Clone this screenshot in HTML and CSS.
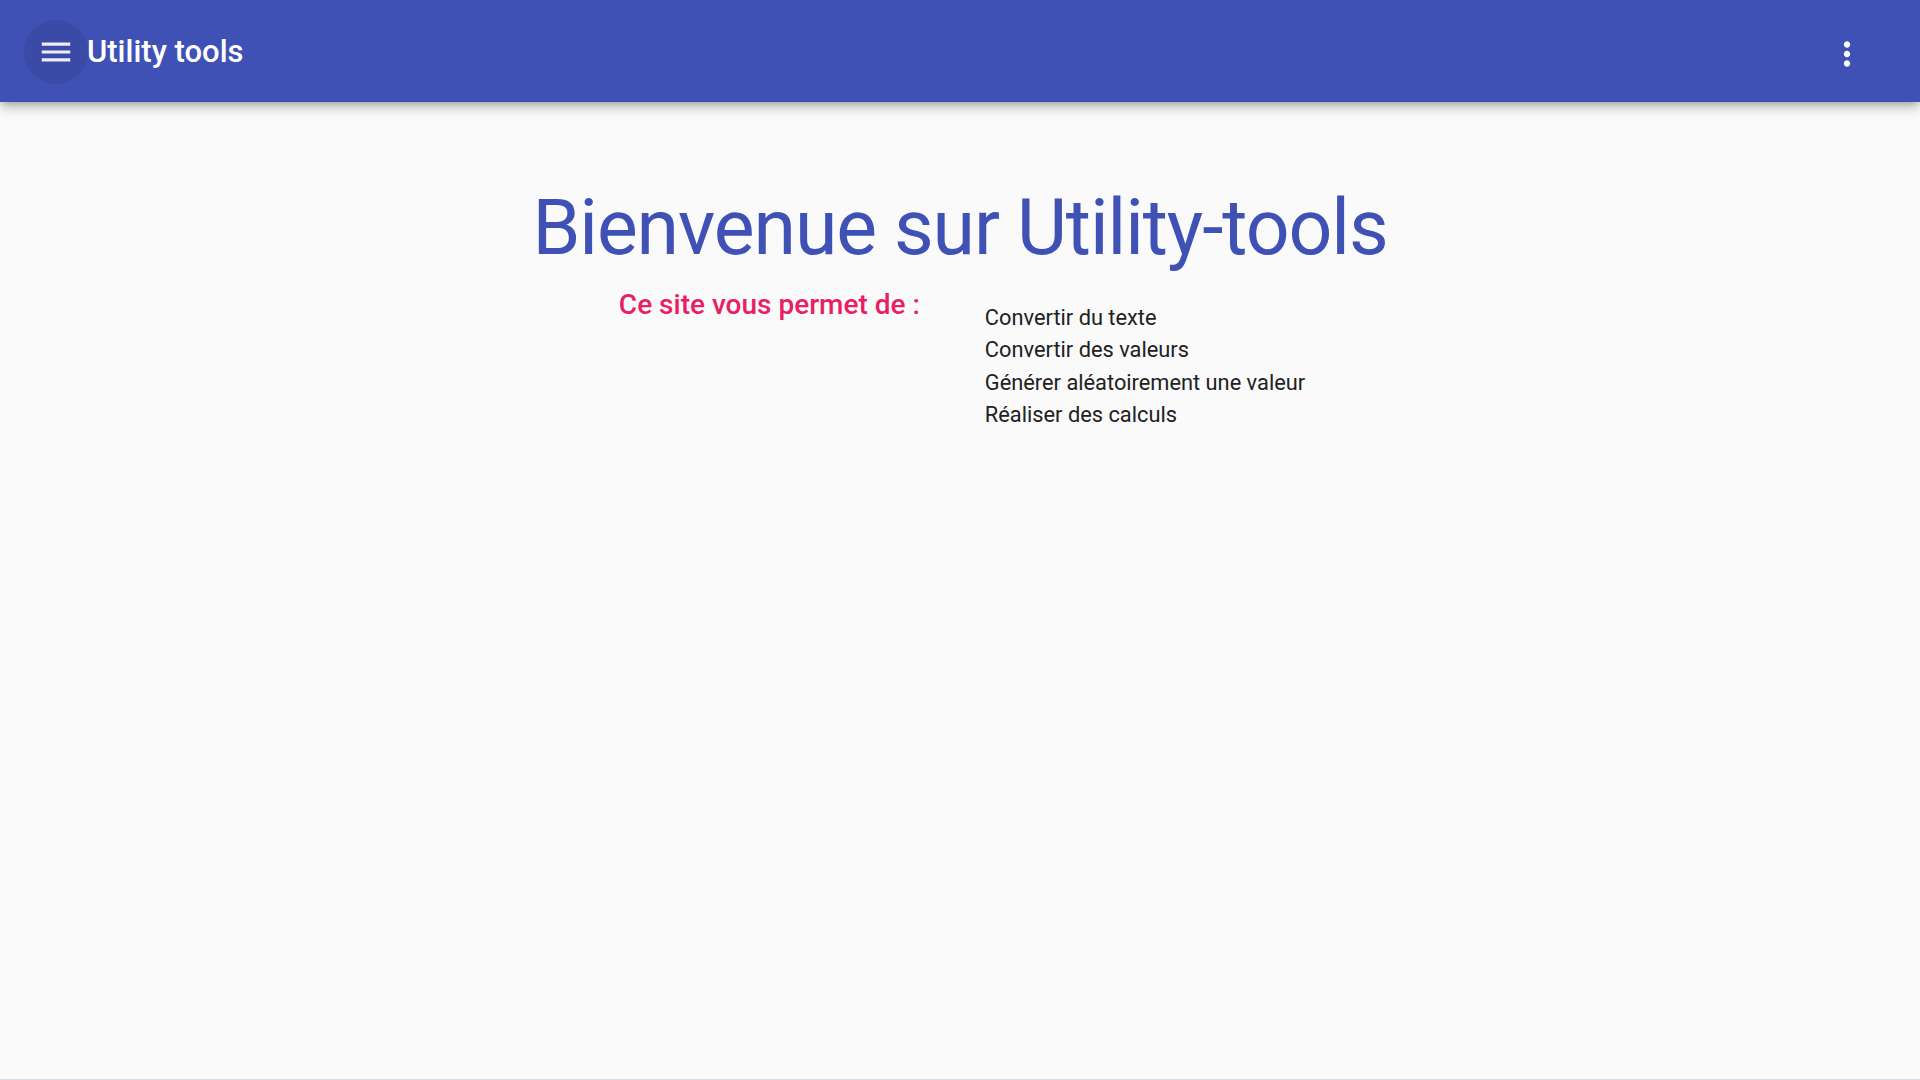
FILE: index.html
```html
<!DOCTYPE html>
<html lang="fr">
<head>
<meta charset="utf-8">
<title>Utility tools</title>
<link rel="stylesheet" href="styles.css">
</head>
<body>
<header class="toolbar">
  <div class="toolbar-left">
    <button class="icon-btn menu-btn" aria-label="menu">
      <svg viewBox="0 0 24 24" width="38" height="38"><path d="M3 18h18v-2H3v2zm0-5h18v-2H3v2zm0-7v2h18V6H3z" fill="currentColor"/></svg>
    </button>
    <span class="app-title">Utility tools</span>
  </div>
  <button class="icon-btn more-btn" aria-label="plus">
    <svg viewBox="0 0 24 24" width="38" height="38"><path d="M12 8c1.1 0 2-.9 2-2s-.9-2-2-2-2 .9-2 2 .9 2 2 2zm0 2c-1.1 0-2 .9-2 2s.9 2 2 2 2-.9 2-2-.9-2-2-2zm0 6c-1.1 0-2 .9-2 2s.9 2 2 2 2-.9 2-2-.9-2-2-2z" fill="currentColor"/></svg>
  </button>
</header>
<main class="content">
  <h1 class="welcome">Bienvenue sur Utility-tools</h1>
  <div class="features">
    <h2 class="features-title">Ce site vous permet de :</h2>
    <ul class="features-list">
      <li>Convertir du texte</li>
      <li>Convertir des valeurs</li>
      <li>Générer aléatoirement une valeur</li>
      <li>Réaliser des calculs</li>
    </ul>
  </div>
</main>
</body>
</html>
```
FILE: styles.css
```css
html, body {
  margin: 0;
  padding: 0;
  height: 100%;
}
body {
  background: #fafafa;
  font-family: Roboto, "Noto Sans", Arial, sans-serif;
  color: rgba(0, 0, 0, 0.87);
  display: flex;
  flex-direction: column;
  box-sizing: border-box;
  border-bottom: 1px solid #d3dce4;
}
.toolbar {
  height: 102px;
  background: #3f51b5;
  color: #fff;
  display: flex;
  align-items: center;
  justify-content: space-between;
  padding: 0 24px 0 24px;
  box-shadow: 0 3px 6px -2px rgba(0,0,0,.2), 0 6px 10px 0 rgba(0,0,0,.14), 0 2px 18px 0 rgba(0,0,0,.12);
  position: relative;
  z-index: 2;
  flex-shrink: 0;
}
.toolbar-left {
  display: flex;
  align-items: center;
}
.icon-btn {
  border: 0;
  background: transparent;
  color: #fff;
  padding: 0;
  display: flex;
  align-items: center;
  justify-content: center;
  cursor: pointer;
}
.menu-btn {
  width: 64px;
  height: 64px;
  border-radius: 50%;
  background: rgba(0, 0, 0, 0.08);
  color: #ececf4;
  margin-top: 1px;
}
.app-title {
  font-size: 31px;
  font-weight: 500;
  margin-left: -1px;
  margin-top: 1px;
}
.more-btn {
  width: 64px;
  height: 64px;
  margin-right: 17px;
  margin-top: 5px;
}
.content {
  flex: 1;
  display: flex;
  flex-direction: column;
  align-items: center;
}
.welcome {
  margin: 81px 0 0 0;
  font-size: 77px;
  letter-spacing: -1.1px;
  font-weight: 400;
  color: #3f51b5;
  line-height: normal;
}
.features {
  display: flex;
  align-items: flex-start;
  gap: 65px;
  margin-top: 15px;
  padding-left: 4px;
}
.features-title {
  margin: 0;
  font-size: 28px;
  font-weight: 500;
  color: #e91e63;
  line-height: normal;
}
.features-list {
  list-style: none;
  margin: 14px 0 0 0;
  padding: 0;
  font-size: 21.8px;
  line-height: 32.3px;
  color: #212121;
}
```
